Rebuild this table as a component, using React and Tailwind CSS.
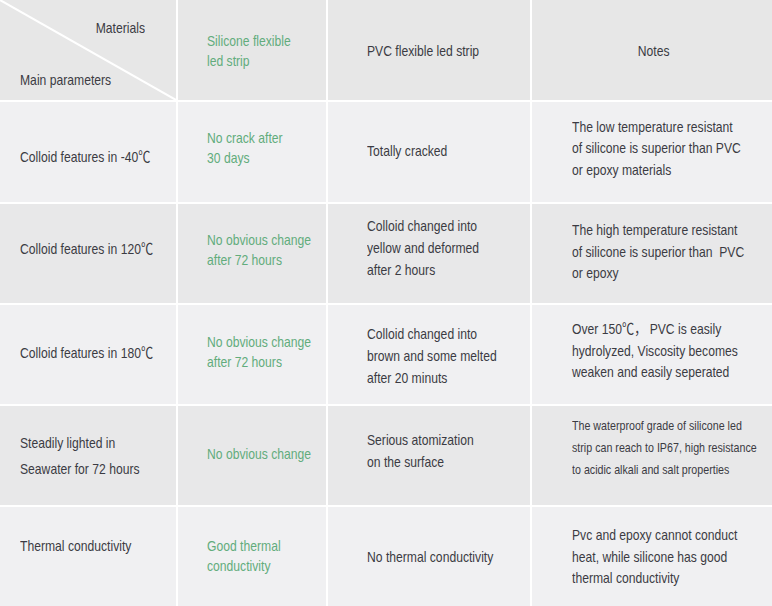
import React from "react";

const font = {
  fontFamily: '"Liberation Sans Narrow", "Liberation Sans", "Noto Sans CJK SC", sans-serif',
};

// nudge: [parameter, silicone, pvc, notes] margin classes to match the uneven vertical placement
const rows = [
  {
    bg: "bg-[#f0f0f2]",
    nudge: ["mt-[8px]", "mb-[8px]", "mb-[2px]", "mb-[8px]"],
    param: ["Colloid features in -40℃"],
    silicone: ["No crack after", "30 days"],
    pvc: ["Totally cracked"],
    notes: ["The low temperature resistant", "of silicone is superior than PVC", "or epoxy materials"],
  },
  {
    bg: "bg-[#e8e8e9]",
    nudge: ["mb-[10px]", "mb-[7px]", "mb-[12px]", "mb-[4px]"],
    param: ["Colloid features in 120℃"],
    silicone: ["No obvious change", "after 72 hours"],
    pvc: ["Colloid changed into", "yellow and deformed", "after 2 hours"],
    notes: ["The high temperature resistant", "of silicone is superior than  PVC", "or epoxy"],
  },
  {
    bg: "bg-[#f0f0f2]",
    nudge: ["mb-[4px]", "mb-[5px]", "mt-[2px]", "mb-[8px]"],
    param: ["Colloid features in 180℃"],
    silicone: ["No obvious change", "after 72 hours"],
    pvc: ["Colloid changed into", "brown and some melted", "after 20 minuts"],
    notes: ["Over 150℃， PVC is easily", "hydrolyzed, Viscosity becomes", "weaken and easily seperated"],
  },
  {
    bg: "bg-[#e8e8e9]",
    nudge: ["", "mb-[4px]", "mb-[10px]", "mb-[16px]"],
    param: ["Steadily lighted in", "Seawater for 72 hours"],
    paramLeading: "leading-[26px]",
    silicone: ["No obvious change"],
    pvc: ["Serious atomization", "on the surface"],
    notes: ["The waterproof grade of silicone led", "strip can reach to IP67, high resistance", "to acidic alkali and salt properties"],
    small: true,
  },
  {
    bg: "bg-[#f0f0f2]",
    nudge: ["", "mb-[2px]", "", ""],
    param: ["Thermal conductivity"],
    paramTop: true,
    silicone: ["Good thermal", "conductivity"],
    pvc: ["No thermal conductivity"],
    notes: ["Pvc and epoxy cannot conduct", "heat, while silicone has good", "thermal conductivity"],
  },
];

// the reference uses a condensed face; squeeze the regular one horizontally
const Lines = ({ lines, className = "" }) => (
  <div className={`origin-left scale-x-[0.81] whitespace-pre ${className}`}>
    {lines.map((l, i) => (
      <div key={i}>{l}</div>
    ))}
  </div>
);

export default function App() {
  return (
    <div
      style={font}
      className="w-[772px] h-[606px] bg-white grid grid-cols-[176px_148px_202px_240px] grid-rows-[100px_100px_99px_99px_99px_99px] gap-[2px] text-[15px] text-[#3b3b43] overflow-hidden"
    >
      {/* header */}
      <div className="relative bg-[#e7e7e7] flex flex-col justify-between pt-[17px] pb-[10px] pl-[20px] pr-[31px] leading-[21px]">
        <svg className="absolute inset-0" width="176" height="100">
          <line x1="0" y1="0" x2="176" y2="100" stroke="#ffffff" strokeWidth="2" />
        </svg>
        <div className="relative origin-right scale-x-[0.81] text-right">Materials</div>
        <div className="relative origin-left scale-x-[0.81]">Main parameters</div>
      </div>
      <div className="bg-[#e7e7e7] flex items-center pl-[29px] text-[#62ac7c] leading-[20px]">
        <Lines lines={["Silicone flexible", "led strip"]} className="mt-[2px]" />
      </div>
      <div className="bg-[#e7e7e7] flex items-center pl-[39px]">
        <Lines lines={["PVC flexible led strip"]} className="mt-[2px]" />
      </div>
      <div className="bg-[#e7e7e7] flex items-center justify-center pl-[4px]">
        <div className="scale-x-[0.81] mt-[2px]">Notes</div>
      </div>

      {rows.map((r, i) => (
        <React.Fragment key={i}>
          <div
            className={`${r.bg} flex pl-[20px] ${r.paramLeading || "leading-[21px]"} ${
              r.paramTop ? "items-start pt-[28px]" : "items-center"
            }`}
          >
            <Lines lines={r.param} className={r.nudge[0]} />
          </div>
          <div className={`${r.bg} flex items-center pl-[29px] text-[#62ac7c] leading-[20px]`}>
            <Lines lines={r.silicone} className={r.nudge[1]} />
          </div>
          <div className={`${r.bg} flex items-center pl-[39px] leading-[22px]`}>
            <Lines lines={r.pvc} className={r.nudge[2]} />
          </div>
          <div
            className={`${r.bg} flex items-center pl-[40px] ${
              r.small ? "text-[13.2px] leading-[22px]" : "leading-[21.5px]"
            }`}
          >
            <Lines lines={r.notes} className={r.nudge[3]} />
          </div>
        </React.Fragment>
      ))}
    </div>
  );
}
